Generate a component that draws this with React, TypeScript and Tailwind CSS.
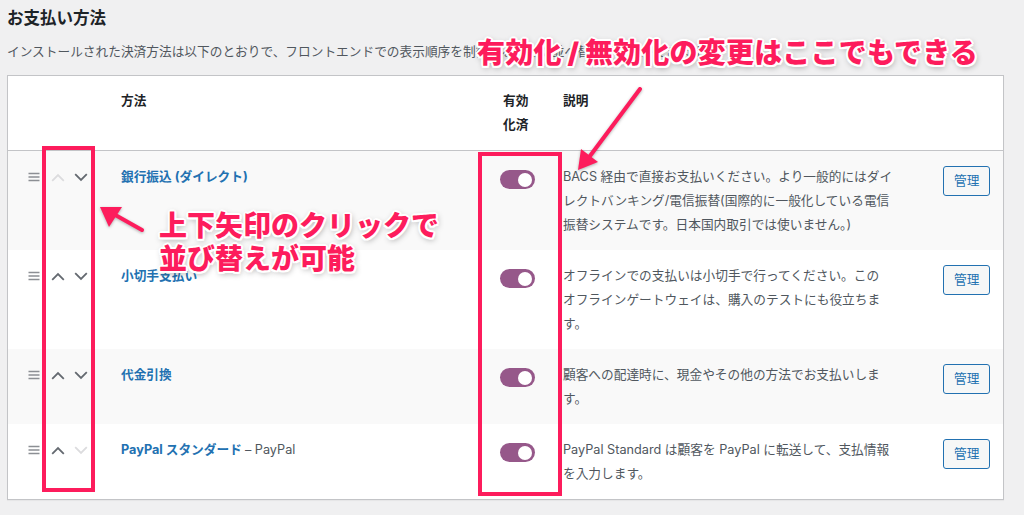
import React from "react";

const Handle = () => (
  <svg width="12" height="10" viewBox="0 0 12 10" className="shrink-0">
    <path d="M0.5 1.5H11.5M0.5 5H11.5M0.5 8.5H11.5" stroke="#8c8f94" strokeWidth="1.7" />
  </svg>
);

const Chevron = ({ up, disabled }: { up?: boolean; disabled?: boolean }) => (
  <svg width="14" height="9" viewBox="0 0 14 9" className="shrink-0">
    <path
      d={up ? "M1.2 7.8L7 2L12.8 7.8" : "M1.2 1.2L7 7L12.8 1.2"}
      fill="none"
      stroke={disabled ? "#dcdcde" : "#646970"}
      strokeWidth="1.8"
    />
  </svg>
);

const Toggle = () => (
  <div className="mt-[5px] flex h-[19px] w-[35px] items-center justify-end rounded-full bg-[#96588a] pr-[3px]">
    <div className="h-[14px] w-[14px] rounded-full bg-white" />
  </div>
);

type Row = {
  name: React.ReactNode;
  desc: React.ReactNode;
  upDisabled?: boolean;
  downDisabled?: boolean;
  striped: boolean;
};

const rows: Row[] = [
  {
    name: "銀行振込 (ダイレクト)",
    desc: (
      <>
        BACS 経由で直接お支払いください。より一般的にはダイ
        <br />
        レクトバンキング/電信振替(国際的に一般化している電信
        <br />
        振替システムです。日本国内取引では使いません。)
      </>
    ),
    upDisabled: true,
    striped: true,
  },
  {
    name: "小切手支払い",
    desc: (
      <>
        オフラインでの支払いは小切手で行ってください。この
        <br />
        オフラインゲートウェイは、購入のテストにも役立ちま
        <br />
        す。
      </>
    ),
    striped: false,
  },
  {
    name: "代金引換",
    desc: (
      <>
        顧客への配達時に、現金やその他の方法でお支払いしま
        <br />
        す。
      </>
    ),
    striped: true,
  },
  {
    name: (
      <>
        PayPal スタンダード <span className="font-normal text-[#50575e]">– PayPal</span>
      </>
    ),
    desc: (
      <>
        PayPal Standard は顧客を PayPal に転送して、支払情報
        <br />
        を入力します。
      </>
    ),
    downDisabled: true,
    striped: false,
  },
];

const halo =
  "[text-shadow:2px_0_0_#fff,-2px_0_0_#fff,0_2px_0_#fff,0_-2px_0_#fff,1.5px_1.5px_0_#fff,-1.5px_1.5px_0_#fff,1.5px_-1.5px_0_#fff,-1.5px_-1.5px_0_#fff,0_0_4px_#fff,1px_2px_6px_rgba(0,0,0,0.45)]";

export default function App() {
  return (
    <div className="relative h-[515px] w-[1024px] overflow-hidden bg-[#f0f0f1] font-['Inter','Noto_Sans_CJK_JP',sans-serif]">
      <div className="px-[7px] pt-[8px]">
        <h2 className="text-[16.5px] font-bold leading-[20px] text-[#1d2327]">お支払い方法</h2>
        <p className="mt-[15px] whitespace-nowrap text-[12.7px] leading-[18px] text-[#50575e]">
          インストールされた決済方法は以下のとおりで、フロントエンドでの表示順序を制御するために並べ替えることができます。
        </p>
        <div className="mt-[14px] w-[997px] border border-[#c3c4c7] bg-white text-[12.7px] shadow-[0_1px_1px_rgba(0,0,0,0.04)]">
          <div className="flex h-[75px] border-b border-[#c3c4c7] pt-[13px] font-bold leading-[24px] text-[#1d2327]">
            <div className="w-[113px]" />
            <div className="w-[379px]">方法</div>
            <div className="w-[63px] pl-[3px]">
              有効
              <br />
              化済
            </div>
            <div className="w-[380px]">説明</div>
          </div>
          {rows.map((r, i) => (
            <div
              key={i}
              className={`flex pb-[13px] pt-[14px] leading-[24px] ${r.striped ? "bg-[#f9f9f9]" : "bg-white"}`}
            >
              <div className="flex h-[24px] w-[113px] items-center pl-[20px]">
                <Handle />
                <div className="ml-[11px]">
                  <Chevron up disabled={r.upDisabled} />
                </div>
                <div className="ml-[9px]">
                  <Chevron disabled={r.downDisabled} />
                </div>
              </div>
              <div className="w-[379px] font-bold text-[#2271b1]">{r.name}</div>
              <div className="w-[63px]">
                <Toggle />
              </div>
              <div className="w-[380px] text-[#50575e]">{r.desc}</div>
              <div className="pt-[1px]">
                <div className="flex h-[30px] items-center rounded-[3px] border border-[#2271b1] bg-[#f6f7f7] px-[10px] text-[#2271b1]">
                  管理
                </div>
              </div>
            </div>
          ))}
        </div>
      </div>

      {/* annotations */}
      <div className="absolute left-[42px] top-[146px] h-[346px] w-[53px] border-4 border-[#fd1c5c]" />
      <div className="absolute left-[478px] top-[152px] h-[344px] w-[84px] border-4 border-[#fd1c5c]" />

      <div
        className={`absolute left-[477px] top-[39px] whitespace-nowrap text-[28px] font-black leading-[28px] tracking-[0.2px] text-[#fd1c5c] ${halo}`}
      >
        有効化 / 無効化の変更はここでもできる
      </div>
      <div
        className={`absolute left-[159px] top-[210px] whitespace-nowrap text-[28px] font-black leading-[33px] text-[#fd1c5c] ${halo}`}
      >
        上下矢印のクリックで
        <br />
        並び替えが可能
      </div>

      <svg className="pointer-events-none absolute left-0 top-0" width="1024" height="515">
        <g filter="drop-shadow(0 1px 1.5px rgba(0,0,0,0.3))">
          <line x1="640" y1="89" x2="587" y2="160" stroke="#fd1c5c" strokeWidth="4" strokeLinecap="round" />
          <polygon points="578,170 581,149 598,162" fill="#fd1c5c" />
          <line x1="142" y1="230" x2="110" y2="212" stroke="#fd1c5c" strokeWidth="4" strokeLinecap="round" />
          <polygon points="100,207 122,207 109,227" fill="#fd1c5c" />
        </g>
      </svg>
    </div>
  );
}
